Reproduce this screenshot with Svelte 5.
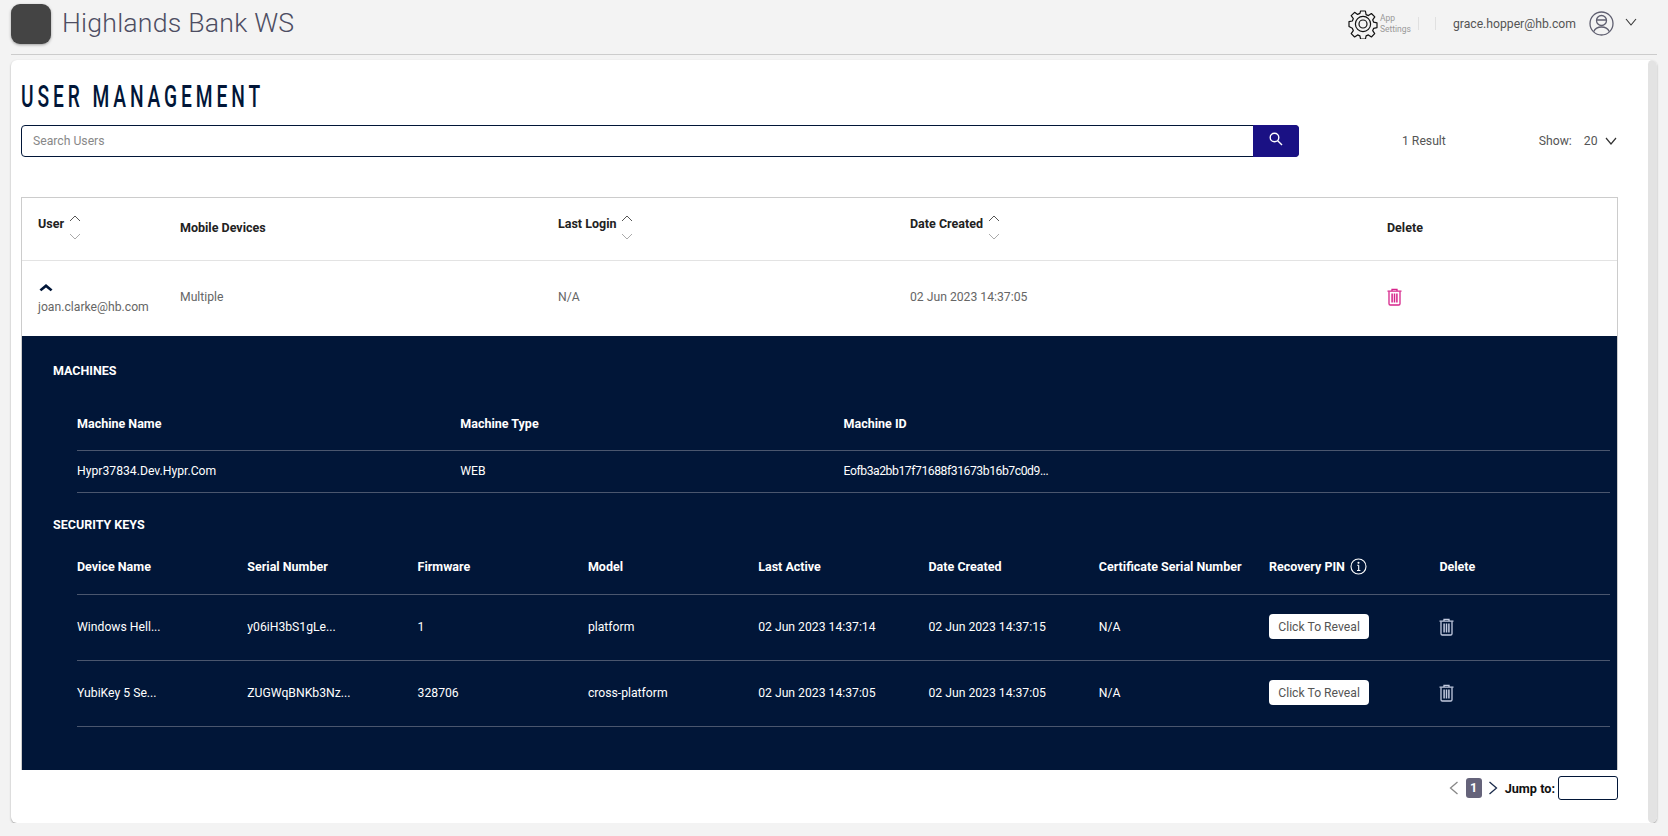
<script>
  const machines = [{ name: "Hypr37834.Dev.Hypr.Com", type: "WEB", id: "Eofb3a2bb17f71688f31673b16b7c0d9..." }];
  const keyCols = ["Device Name", "Serial Number", "Firmware", "Model", "Last Active", "Date Created", "Certificate Serial Number"];
  const keys = [
    ["Windows Hell...", "y06iH3bS1gLe...", "1", "platform", "02 Jun 2023 14:37:14", "02 Jun 2023 14:37:15", "N/A"],
    ["YubiKey 5 Se...", "ZUGWqBNKb3Nz...", "328706", "cross-platform", "02 Jun 2023 14:37:05", "02 Jun 2023 14:37:05", "N/A"]
  ];
</script>

{#snippet sortArrows()}
  <svg class="sort" width="12" height="25" viewBox="0 0 12 25" fill="none">
    <path d="M1 6 6 1l5 5" stroke="#555" />
    <path d="M1 19l5 5 5-5" stroke="#aaa" />
  </svg>
{/snippet}

{#snippet trash(color)}
  <svg width="15" height="18" viewBox="0 0 15 18" fill="none" stroke={color} stroke-width="1.3">
    <path d="M.5 3.200h14M5 3V1.400h5V3" />
    <path d="M2 3.500v12.200c0 .8.500 1.300 1.300 1.300h8.400c.8 0 1.300-.5 1.300-1.300V3.500" />
    <path d="M5.100 5.500v9M7.500 5.500v9M9.900 5.500v9" stroke-width="1.500" />
  </svg>
{/snippet}

<header class="topbar">
  <div class="logo"></div>
  <div class="brand">Highlands Bank WS</div>
  <div class="top-right">
    <svg class="gear" width="30" height="30" viewBox="0 0 30 30" fill="none" stroke="#111" stroke-width="1.2">
      <path d="M12.600 2h4.800l.7 3.600 2.300 1 3-2.100 3.400 3.400-2.100 3 1 2.300 3.300.6v4.800l-3.300.7-1 2.300 2 3-3.300 3.400-3-2.100-2.300 1-.7 3.200h-4.800l-.7-3.200-2.300-1-3 2.100-3.400-3.400 2.100-3-1-2.300L1 17.400v-4.800l3.300-.6 1-2.300-2.100-3 3.400-3.400 3 2.100 2.300-1z" stroke-linejoin="round" />
      <circle cx="15" cy="15" r="7.600" />
      <circle cx="15" cy="15" r="4" />
    </svg>
    <div class="app-settings">App<br />Settings</div>
    <span class="tick first"></span>
    <span class="tick"></span>
    <span class="email">grace.hopper@hb.com</span>
    <svg class="avatar" width="25" height="25" viewBox="0 0 25 25" fill="none" stroke="#5f5f70" stroke-width="1.3">
      <circle cx="12.500" cy="12.500" r="11.500" />
      <circle cx="12.500" cy="9.500" r="5" />
      <path d="M7.600 9h9.800M4.800 20.500c1.500-3.500 4.500-4.500 7.700-4.500s6.200 1 7.700 4.500" />
    </svg>
    <svg class="caret" width="12" height="8" viewBox="0 0 12 8" fill="none" stroke="#333" stroke-width="1.1"><path d="M1 1l5 6 5-6" /></svg>
  </div>
</header>

<main class="card">
  <div class="content">
    <h1><span>USER MANAGEMENT</span></h1>
    <div class="toolbar">
      <div class="search">
        <span class="placeholder">Search Users</span>
        <button class="search-btn" aria-label="Search">
          <svg width="14" height="14" viewBox="0 0 14 14" fill="none" stroke="#fff" stroke-width="1.4">
            <circle cx="5.500" cy="5.500" r="4.300" /><path d="M8.700 8.700 13 13" />
          </svg>
        </button>
      </div>
      <span class="result">1 Result</span>
      <span class="show">Show:</span>
      <span class="show-num">20</span>
      <svg class="show-caret" width="12" height="8" viewBox="0 0 12 8" fill="none" stroke="#333" stroke-width="1.2"><path d="M1 1l5 6 5-6" /></svg>
    </div>

    <section class="table">
      <div class="row head">
        <div class="th"><span>User</span>{@render sortArrows()}</div>
        <div class="th"><span>Mobile Devices</span></div>
        <div class="th"><span>Last Login</span>{@render sortArrows()}</div>
        <div class="th"><span>Date Created</span>{@render sortArrows()}</div>
        <div class="th"><span>Delete</span></div>
      </div>
      <div class="row body">
        <div class="user">
          <svg width="14" height="8" viewBox="0 0 14 8" fill="#011638"><path d="M7 0l6.500 5.500-1.800 1.800L7 3.400 2.300 7.300.5 5.500z" /></svg>
          <span>joan.clarke@hb.com</span>
        </div>
        <div>Multiple</div>
        <div>N/A</div>
        <div>02 Jun 2023 14:37:05</div>
        <div class="trash-cell">{@render trash("#d6248a")}</div>
      </div>

      <div class="detail">
        <h2 class="machines-title">MACHINES</h2>
        <div class="machine-grid mhead">
          <div>Machine Name</div><div>Machine Type</div><div>Machine ID</div>
        </div>
        {#each machines as m}
          <div class="machine-grid mrow">
            <div>{m.name}</div><div>{m.type}</div><div class="mid">{m.id}</div>
          </div>
        {/each}

        <h2 class="keys-title">SECURITY KEYS</h2>
        <div class="keys-grid khead">
          {#each keyCols as c}<div>{c}</div>{/each}
          <div class="pin">Recovery PIN
            <svg width="17" height="17" viewBox="0 0 17 17" fill="none" stroke="#fff" stroke-width="1.1">
              <circle cx="8.500" cy="8.500" r="7.500" /><path d="M8.700 7.200v5M7 12.500h3.400M7.200 7.300h1.500" /><circle cx="8.500" cy="4.800" r=".5" fill="#fff" />
            </svg>
          </div>
          <div>Delete</div>
        </div>
        {#each keys as k}
          <div class="keys-grid krow">
            {#each k as v}<div>{v}</div>{/each}
            <div><button class="reveal">Click To Reveal</button></div>
            <div class="ktrash">{@render trash("#c3cbe0")}</div>
          </div>
        {/each}
      </div>
    </section>

    <nav class="pager">
      <svg width="10" height="14" viewBox="0 0 10 14" fill="none" stroke="#888" stroke-width="1.3"><path d="M8.500 1 1.500 7l7 6" /></svg>
      <span class="page">1</span>
      <svg width="10" height="14" viewBox="0 0 10 14" fill="none" stroke="#1b2b4b" stroke-width="1.3"><path d="M1.500 1l7 6-7 6" /></svg>
      <span class="jump">Jump to:</span>
      <span class="jump-input"></span>
    </nav>
  </div>
  <div class="scrollbar"></div>
</main>

<style>
  :global(body) {
    background: #f3f3f3;
    font-family: Roboto, "Liberation Sans", sans-serif;
    color: #555;
  }

  .topbar {
    height: 55px;
    margin: 0 11px;
    box-sizing: border-box;
    border-bottom: 1px solid #ccc;
    display: flex;
    align-items: flex-start;
  }
  .logo {
    width: 40px;
    height: 40px;
    margin-top: 4px;
    border-radius: 9px;
    background: #444;
    box-shadow: 0 1px 3px rgba(0, 0, 0, 0.35);
  }
  .brand {
    margin: 5px 0 0 11px;
    font-size: 26.7px;
    line-height: 36px;
    font-weight: 300;
    color: #4d4d62;
    letter-spacing: 0.2px;
  }
  .top-right {
    margin-left: auto;
    display: flex;
    align-items: center;
    height: 47px;
  }
  .gear {
    margin-right: 2px;
  }
  .app-settings {
    width: 38px;
    font-size: 8.5px;
    line-height: 11px;
    color: #999;
  }
  .tick {
    width: 1px;
    height: 13px;
    background: #e0e0e0;
    margin-left: 16px;
  }
  .tick.first {
    margin-left: 0;
  }
  .email {
    margin-left: 17px;
    font-size: 12.2px;
    color: #555;
  }
  .avatar {
    margin-left: 13px;
  }
  .caret {
    margin: -3px 20px 0 11px;
  }

  .card {
    margin: 5px 11px 0;
    height: 763px;
    background: #fff;
    border-radius: 6px;
    box-shadow: 0 1px 2px rgba(0, 0, 0, 0.35);
    display: flex;
    overflow: hidden;
  }
  .content {
    width: 1637px;
    box-sizing: border-box;
    padding: 0 20px 0 10px;
  }
  .scrollbar {
    width: 9px;
    background: #e3e3e3;
    border-radius: 5px;
  }
  h1 {
    margin: 0;
    padding-top: 17px;
    height: 48px;
    font-size: 32px;
    line-height: 38px;
    font-weight: 500;
    letter-spacing: 6.5px;
    color: #011638;
    white-space: nowrap;
  }
  h1 span {
    display: inline-block;
    transform: scaleX(0.6);
    transform-origin: left center;
  }
  .toolbar {
    display: flex;
    align-items: center;
    height: 32px;
    font-size: 12.2px;
    color: #555;
  }
  .search {
    width: 1278px;
    height: 32px;
    box-sizing: border-box;
    border: 1px solid #011638;
    border-radius: 4px;
    display: flex;
    align-items: center;
    justify-content: space-between;
    padding-left: 11px;
  }
  .placeholder {
    color: #888;
    font-size: 12.2px;
    margin-top: -1px;
  }
  .search-btn {
    width: 46px;
    height: 32px;
    margin-right: -1px;
    border: 0;
    border-radius: 0 4px 4px 0;
    background: #1a1184;
    padding: 0 0 2px;
  }
  .result {
    margin: -1px 0 0 103px;
  }
  .show {
    margin: -1px 0 0 93px;
  }
  .show-num {
    margin: -1px 0 0 12px;
  }
  .show-caret {
    margin-left: 7px;
  }

  .table {
    margin-top: 40px;
    width: 1597px;
    box-sizing: border-box;
    border: 1px solid #ccc;
    border-bottom: 0;
  }
  .row {
    display: grid;
    grid-template-columns: 142px 378px 352px 477px 1fr;
    padding-left: 16px;
    align-items: center;
  }
  .head {
    height: 63px;
    box-sizing: border-box;
    padding-bottom: 3px;
    border-bottom: 1px solid #e3e3e3;
    color: #222;
    font-size: 12.5px;
    font-weight: 700;
  }
  .th {
    display: flex;
    align-items: flex-start;
    gap: 5px;
    line-height: 16px;
  }
  .th span {
    margin-top: 1px;
  }
  .body {
    height: 75px;
    box-sizing: border-box;
    padding-bottom: 3px;
    font-size: 12.2px;
    color: #666;
  }
  .user {
    display: flex;
    flex-direction: column;
    align-items: flex-start;
    gap: 8px;
    margin-top: 3px;
  }
  .user svg {
    margin-left: 1px;
  }
  .trash-cell {
    line-height: 0;
  }

  .detail {
    background: #011638;
    height: 434px;
    box-sizing: border-box;
    padding: 27px 7px 0 55px;
    color: #fff;
    font-size: 12.2px;
  }
  h2 {
    margin: 0 0 0 -24px;
    font-size: 12.5px;
    line-height: 16px;
    font-weight: 700;
  }
  .machine-grid {
    display: grid;
    grid-template-columns: repeat(3, 383.3px);
    align-items: center;
    border-bottom: 1px solid #4a566e;
  }
  .mhead {
    margin-top: 17px;
    height: 55px;
    box-sizing: border-box;
    font-weight: 700;
    font-size: 12.5px;
  }
  .mrow {
    height: 42px;
    box-sizing: border-box;
    padding-bottom: 2px;
  }
  .mid {
    letter-spacing: -0.45px;
  }
  .keys-title {
    margin-top: 24px;
  }
  .keys-grid {
    display: grid;
    grid-template-columns: repeat(9, 170.3px);
    align-items: center;
    border-bottom: 1px solid #4a566e;
  }
  .khead {
    height: 62px;
    box-sizing: border-box;
    font-weight: 700;
    font-size: 12.5px;
    padding-top: 6px;
  }
  .krow {
    height: 66px;
    box-sizing: border-box;
    padding-bottom: 2px;
  }
  .pin {
    display: flex;
    align-items: center;
    gap: 5px;
  }
  .reveal {
    width: 100px;
    height: 25px;
    border: 0;
    border-radius: 4px;
    background: #fff;
    color: #555;
    padding: 0;
    font: 400 12.2px Roboto, sans-serif;
  }
  .ktrash {
    line-height: 0;
  }

  .pager {
    display: flex;
    align-items: center;
    justify-content: flex-end;
    height: 24px;
    width: 1597px;
    margin-top: 6px;
    font-size: 12.7px;
    color: #111;
  }
  .page {
    width: 16px;
    height: 20px;
    margin: 0 6px 0 7px;
    border-radius: 3px;
    background: #65637a;
    color: #fff;
    font-weight: 700;
    text-align: center;
    line-height: 20px;
  }
  .jump {
    margin: 0 3px 0 7px;
    font-weight: 700;
  }
  .jump-input {
    width: 58px;
    height: 22px;
    border: 1px solid #011638;
    border-radius: 3px;
  }
</style>
